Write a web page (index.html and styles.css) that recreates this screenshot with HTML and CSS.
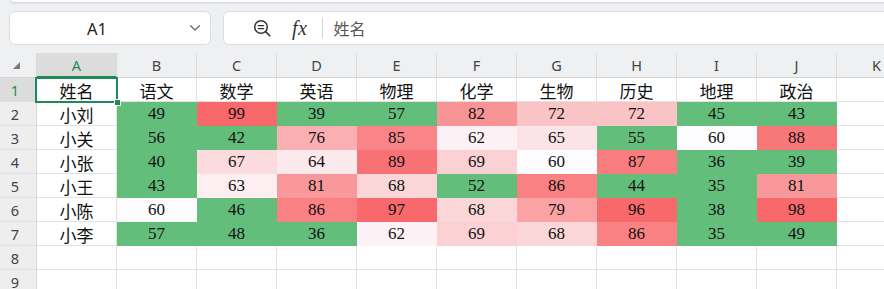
FILE: index.html
```html
<!DOCTYPE html>
<html lang="zh">
<head>
<meta charset="utf-8">
<link rel="stylesheet" href="styles.css">
</head>
<body>
<div class="ribbon-edge"></div>
<div class="toolbar">
  <div class="namebox">
    <span class="namebox-text">A1</span>
    <svg class="chev" width="12" height="8" viewBox="0 0 12 8"><path d="M1.5 1.8 L6 6 L10.5 1.8" fill="none" stroke="#6b6b6b" stroke-width="1.3" stroke-linecap="round" stroke-linejoin="round"/></svg>
  </div>
  <div class="formula">
    <svg class="zoom-ic" width="19" height="19" viewBox="0 0 19 19"><circle cx="8" cy="8" r="6.3" fill="none" stroke="#333" stroke-width="1.5"/><path d="M5.4 6.6 H10.6 M5.4 9.6 H10.6" stroke="#333" stroke-width="1.4" stroke-linecap="round"/><path d="M12.6 12.6 L16.8 16.8" stroke="#333" stroke-width="1.6" stroke-linecap="round"/></svg>
    <span class="fx">fx</span>
    <span class="fsep"></span>
    <span class="ftext">姓名</span>
  </div>
</div>
<div class="sheet">
  <div class="corner"><span class="tri"></span></div>
  <div class="ch sel">A</div><div class="ch">B</div><div class="ch">C</div><div class="ch">D</div><div class="ch">E</div><div class="ch">F</div><div class="ch">G</div><div class="ch">H</div><div class="ch">I</div><div class="ch">J</div><div class="ch">K</div>

  <div class="rh rsel">1</div>
  <div class="c active">姓名<span class="selbox"></span><span class="handle"></span></div><div class="c">语文</div><div class="c">数学</div><div class="c">英语</div><div class="c">物理</div><div class="c">化学</div><div class="c">生物</div><div class="c">历史</div><div class="c">地理</div><div class="c">政治</div><div class="c"></div>

  <div class="rh">2</div>
  <div class="c">小刘</div>
  <div class="c hm" style="background:#63be7b">49</div>
  <div class="c hm" style="background:#f8696b">99</div>
  <div class="c hm" style="background:#63be7b">39</div>
  <div class="c hm" style="background:#63be7b">57</div>
  <div class="c hm" style="background:rgb(249,148,150)">82</div>
  <div class="c hm" style="background:rgb(250,195,198)">72</div>
  <div class="c hm" style="background:rgb(250,195,198)">72</div>
  <div class="c hm" style="background:#63be7b">45</div>
  <div class="c hm" style="background:#63be7b">43</div>
  <div class="c"></div>

  <div class="rh">3</div>
  <div class="c">小关</div>
  <div class="c hm" style="background:#63be7b">56</div>
  <div class="c hm" style="background:#63be7b">42</div>
  <div class="c hm" style="background:rgb(250,176,179)">76</div>
  <div class="c hm" style="background:rgb(249,133,136)">85</div>
  <div class="c hm" style="background:rgb(252,242,245)">62</div>
  <div class="c hm" style="background:rgb(251,228,231)">65</div>
  <div class="c hm" style="background:#63be7b">55</div>
  <div class="c hm" style="background:rgb(252,252,255)">60</div>
  <div class="c hm" style="background:rgb(248,119,121)">88</div>
  <div class="c"></div>

  <div class="rh">4</div>
  <div class="c">小张</div>
  <div class="c hm" style="background:#63be7b">40</div>
  <div class="c hm" style="background:rgb(251,219,222)">67</div>
  <div class="c hm" style="background:rgb(251,233,236)">64</div>
  <div class="c hm" style="background:rgb(248,114,117)">89</div>
  <div class="c hm" style="background:rgb(251,209,212)">69</div>
  <div class="c hm" style="background:rgb(252,252,255)">60</div>
  <div class="c hm" style="background:rgb(249,124,126)">87</div>
  <div class="c hm" style="background:#63be7b">36</div>
  <div class="c hm" style="background:#63be7b">39</div>
  <div class="c"></div>

  <div class="rh">5</div>
  <div class="c">小王</div>
  <div class="c hm" style="background:#63be7b">43</div>
  <div class="c hm" style="background:rgb(252,238,241)">63</div>
  <div class="c hm" style="background:rgb(249,152,155)">81</div>
  <div class="c hm" style="background:rgb(251,214,217)">68</div>
  <div class="c hm" style="background:#63be7b">52</div>
  <div class="c hm" style="background:rgb(249,129,131)">86</div>
  <div class="c hm" style="background:#63be7b">44</div>
  <div class="c hm" style="background:#63be7b">35</div>
  <div class="c hm" style="background:rgb(249,152,155)">81</div>
  <div class="c"></div>

  <div class="rh">6</div>
  <div class="c">小陈</div>
  <div class="c hm" style="background:rgb(252,252,255)">60</div>
  <div class="c hm" style="background:#63be7b">46</div>
  <div class="c hm" style="background:rgb(249,129,131)">86</div>
  <div class="c hm" style="background:#f8696b">97</div>
  <div class="c hm" style="background:rgb(251,214,217)">68</div>
  <div class="c hm" style="background:rgb(250,162,164)">79</div>
  <div class="c hm" style="background:#f8696b">96</div>
  <div class="c hm" style="background:#63be7b">38</div>
  <div class="c hm" style="background:#f8696b">98</div>
  <div class="c"></div>

  <div class="rh">7</div>
  <div class="c">小李</div>
  <div class="c hm" style="background:#63be7b">57</div>
  <div class="c hm" style="background:#63be7b">48</div>
  <div class="c hm" style="background:#63be7b">36</div>
  <div class="c hm" style="background:rgb(252,242,245)">62</div>
  <div class="c hm" style="background:rgb(251,209,212)">69</div>
  <div class="c hm" style="background:rgb(251,214,217)">68</div>
  <div class="c hm" style="background:rgb(249,129,131)">86</div>
  <div class="c hm" style="background:#63be7b">35</div>
  <div class="c hm" style="background:#63be7b">49</div>
  <div class="c"></div>

  <div class="rh">8</div>
  <div class="c"></div><div class="c"></div><div class="c"></div><div class="c"></div><div class="c"></div><div class="c"></div><div class="c"></div><div class="c"></div><div class="c"></div><div class="c"></div><div class="c"></div>

  <div class="rh">9</div>
  <div class="c"></div><div class="c"></div><div class="c"></div><div class="c"></div><div class="c"></div><div class="c"></div><div class="c"></div><div class="c"></div><div class="c"></div><div class="c"></div><div class="c"></div>
</div>
</body>
</html>
```
FILE: styles.css
```css
* { box-sizing: border-box; }
html, body {
  margin: 0;
  padding: 0;
  width: 884px;
  height: 289px;
  overflow: hidden;
  background: #eff0f2;
  font-family: "Noto Sans", "Noto Sans CJK SC", sans-serif;
}
.ribbon-edge {
  height: 3px;
  margin-left: 10px;
  background: #fff;
  border-bottom: 1px solid #d5d8dc;
  border-left: 1px solid #d5d8dc;
  border-bottom-left-radius: 6px;
  box-shadow: 0 1px 2px rgba(0,0,0,0.06);
}
.toolbar {
  display: flex;
  padding: 8px 0 0 9px;
  gap: 12px;
}
.namebox {
  width: 202px;
  height: 34px;
  flex: none;
  background: #fff;
  border: 1px solid #dcdde0;
  border-radius: 6px;
  display: flex;
  align-items: center;
  padding-right: 9px;
}
.namebox-text {
  flex: 1;
  text-align: center;
  margin-right: 5px;
  font-size: 16.5px;
  color: #222;
  font-family: "Noto Sans", sans-serif;
}
.chev { display: block; }
.formula {
  flex: 1;
  height: 34px;
  margin-right: -12px;
  background: #fff;
  border: 1px solid #dcdde0;
  border-radius: 6px;
  display: flex;
  align-items: center;
  padding-left: 29px;
}
.zoom-ic { display: block; margin-top: 1px; }
.fx {
  margin-left: 20px;
  font-family: "Liberation Serif", serif;
  font-style: italic;
  font-size: 20px;
  color: #333;
  letter-spacing: 0.5px;
}
.fsep {
  width: 1px;
  height: 20px;
  background: #d2d2d2;
  margin-left: 15px;
}
.ftext {
  margin-left: 10px;
  font-family: "Noto Sans CJK SC", sans-serif;
  font-size: 16px;
  color: #555;
}
.sheet {
  margin-top: 8px;
  display: grid;
  grid-template-columns: 37px repeat(11, 80px);
  grid-template-rows: 25px;
  grid-auto-rows: 24px;
  width: 917px;
}
.corner {
  position: relative;
  border-right: 1px solid #d9d9d9;
  border-bottom: 1px solid #d4d4d4;
}
.tri {
  position: absolute;
  left: 13px;
  top: 9px;
  width: 0;
  height: 0;
  border-left: 7px solid transparent;
  border-bottom: 7px solid #7a7a7a;
}
.ch {
  display: flex;
  align-items: center;
  justify-content: center;
  font-size: 14.5px;
  color: #444;
  border-right: 1px solid #dadada;
  border-bottom: 1px solid #d4d4d4;
}
.ch.sel {
  background: #dcdcdc;
  color: #1e8a5a;
  border-bottom: 2px solid #1e8a5a;
}
.rh {
  display: flex;
  align-items: center;
  justify-content: center;
  padding-right: 6px;
  font-size: 14.5px;
  color: #444;
  background: #eeeeee;
  border-right: 1px solid #d9d9d9;
  border-bottom: 1px solid #e0e0e0;
}
.rh.rsel {
  background: #dcdcdc;
  color: #1e8a5a;
}
.c {
  display: flex;
  align-items: center;
  justify-content: center;
  padding-top: 1px;
  background: #fff;
  border-right: 1px solid #e2e2e2;
  border-bottom: 1px solid #e2e2e2;
  font-family: "Liberation Serif", "Noto Sans CJK SC", serif;
  font-size: 17px;
  color: #111;
}
.c.hm { border-color: transparent; }
.c.active { position: relative; }
.selbox {
  position: absolute;
  left: -2px;
  top: -1px;
  right: -2px;
  bottom: -2px;
  border: 2px solid #1e8a5a;
  pointer-events: none;
}
.handle {
  position: absolute;
  right: -5px;
  bottom: -5px;
  width: 7px;
  height: 7px;
  background: #1e8a5a;
  border: 1px solid #fff;
  z-index: 2;
}
```
